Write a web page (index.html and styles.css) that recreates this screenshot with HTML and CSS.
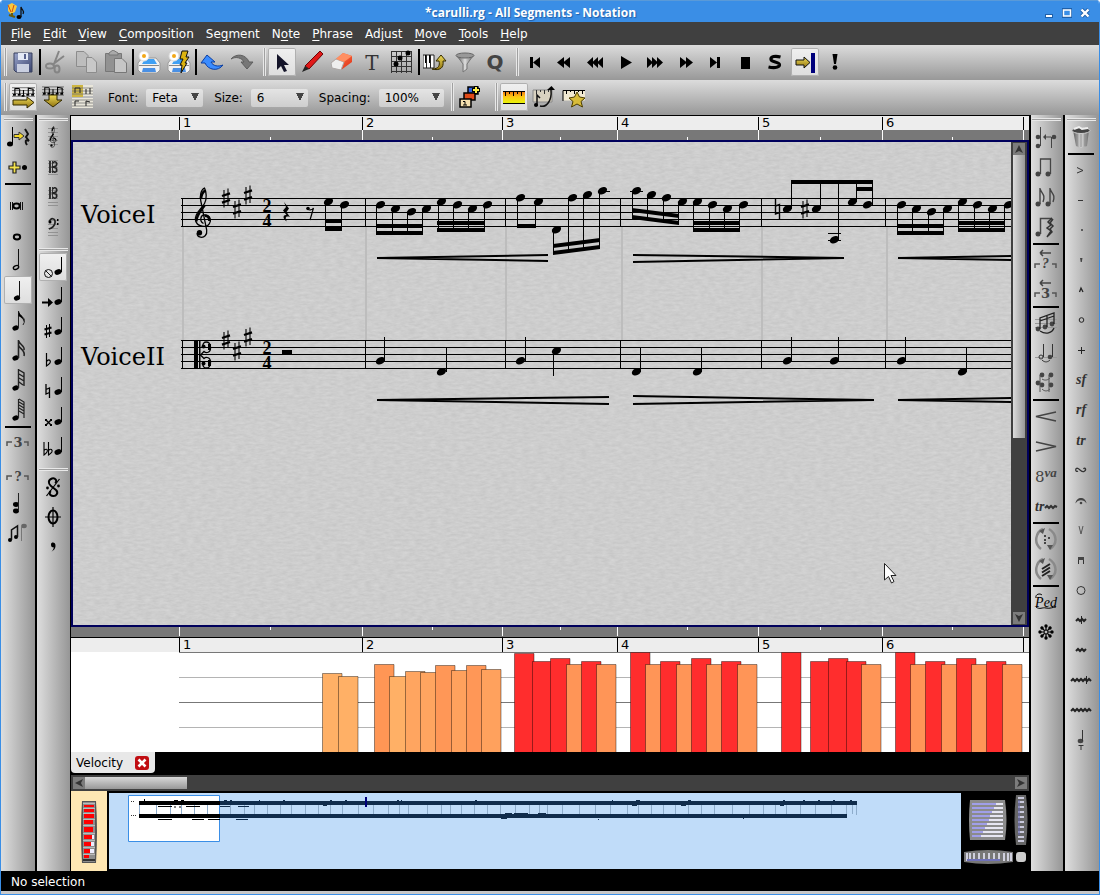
FILE: index.html
```html
<!DOCTYPE html>
<html lang="en">
<head>
<meta charset="utf-8">
<title>*carulli.rg - All Segments - Notation</title>
<link rel="stylesheet" href="styles.css">
</head>
<body>
<svg class="defs" aria-hidden="true">
  <defs>
    <linearGradient id="gold" x1="0" y1="0" x2="0" y2="1"><stop offset="0" stop-color="#f0dc58"/><stop offset="1" stop-color="#8f7210"/></linearGradient>
    <linearGradient id="metal" x1="0" y1="0" x2="1" y2="0"><stop offset="0" stop-color="#555"/><stop offset=".5" stop-color="#ddd"/><stop offset="1" stop-color="#666"/></linearGradient>
    <linearGradient id="disk" x1="0" y1="0" x2="1" y2="1"><stop offset="0" stop-color="#9aa5cc"/><stop offset="1" stop-color="#3a446e"/></linearGradient>
    <linearGradient id="heat" x1="0" y1="0" x2="0" y2="1"><stop offset="0" stop-color="#f07a10"/><stop offset=".4" stop-color="#fdc815"/><stop offset="1" stop-color="#e4fa0a"/></linearGradient>
    <linearGradient id="red" x1="0" y1="0" x2="1" y2="1"><stop offset="0" stop-color="#ff8a5a"/><stop offset="1" stop-color="#e02a10"/></linearGradient>
    <symbol id="head" viewBox="-6 -6 12 12" overflow="visible"><ellipse cx=".5" rx="4.9" ry="3.4" transform="rotate(-27)"/></symbol>
    <symbol id="sharp" viewBox="-6 -12 12 24" overflow="visible"><path d="M-2-8V9.500M2-9.500V8" stroke="#000" stroke-width="1.100"/><path d="M-4-2 4-4.600M-4 4.600 4 2" stroke="#000" stroke-width="2.300"/></symbol>
    <symbol id="n4" viewBox="0 0 24 24"><ellipse cx="17" cy="17" rx="3.600" ry="2.700" transform="rotate(-20 17 17)"/><path d="M20.500 2V17" stroke="#000"/></symbol>
    <symbol id="treble" viewBox="0 0 18 52" overflow="visible"><g fill="none" stroke="#000"><path stroke-width="1.300" d="M9.500 36.500C5 34 6.500 27.500 11 28C16 28.500 17.500 33 15.500 36.500C13 41 3 40.500 1.500 33C.5 26 7.500 22 10.500 16.500C13 12 12.500 4.500 10.500 1C7 2.500 5.500 9 6.800 14L12.700 43C13.400 48 10 51 6.500 50.200C4.500 49.800 3 48 3.200 46"/><path stroke-width="2.600" d="M2.300 34.500C2.300 28 7 23.500 10.500 18.500M11 28.800C14 29 15.500 31 15.400 34M11.200 3.500C9 5 7.300 8.500 7 11.500"/></g><circle cx="5.500" cy="45.800" r="2.700"/></symbol>
    <symbol id="staffmini" viewBox="0 0 24 12"><path d="M0 1.500H24M0 4.500H24M0 7.500H24M0 10.500H24" stroke="#555" stroke-width=".8"/><path d="M3 9V2M8 3V9M3 2.500H8M12 10V4M17 9V2L22 3V9" fill="none" stroke="#000" stroke-width="1.200"/><path d="M1 8H4V10H1ZM6 8H9V10H6ZM10 9H13V11H10ZM15 8H18V10H15ZM20 8H23V10H20Z"/></symbol>
    <symbol id="printer" viewBox="0 0 24 24"><path d="M1 13 5 8H19L23 13V20L20 23H4L1 20Z" fill="#f2f2f2" stroke="#9a9a9a"/><path d="M5 14 8 9H17L20 14Z" fill="#3fa0f4"/><path d="M2 15.500H22" stroke="#888"/><path d="M6 18H18L19 22H5Z" fill="#4a90e4"/><circle cx="7" cy="6" r="5" fill="#fff" stroke="#ddd"/><circle cx="7" cy="6" r="2" fill="#f2a818"/></symbol>
    <symbol id="circ" viewBox="0 0 24 24"><path d="M9 2C2 5-1 16 7 22M15 2C23 7 24 17 16 22" fill="none" stroke="#8a8a8a" stroke-width="2.500"/><path d="M5 4 11 1 9 7ZM13 18 19 18 16 23Z" fill="#555"/></symbol>
    <symbol id="tup" viewBox="0 0 24 24"><path d="M1 14V10H6M18 10H22V14" fill="none" stroke="#555" stroke-width="1.500"/></symbol>
  </defs>
</svg>

<main class="window">
  <header class="titlebar">
    <svg class="logo" viewBox="0 0 20 18"><path d="M2 2 6 0 11 3 9 9 5 11 2 8Z" fill="#f7c83c"/><path d="M2 2 5 9M8 2 6 9" stroke="#d24a10"/><path d="M6 10V14M3 12 9 14" stroke="#6a5a08" stroke-width="2"/><ellipse cx="13" cy="14" rx="2.500" ry="2"/><path d="M15 14V4C16 8 19 7 17 11" stroke="#111" fill="none" stroke-width="1.300"/></svg>
    <h1 class="title">*carulli.rg - All Segments - Notation</h1>
    <div class="winctl">
      <button aria-label="Minimize"><svg viewBox="0 0 12 12"><path d="M2 7H10V11H2Z" fill="#1f5fa8"/><path d="M3 8H9V10H3Z" fill="#fff"/></svg></button>
      <button aria-label="Maximize"><svg viewBox="0 0 12 12"><path d="M1 1H11V11H1Z" fill="#1f5fa8"/><path d="M2.500 3H9.500V9H2.500Z" fill="#3a8ee6" stroke="#fff" stroke-width="1.500"/></svg></button>
      <button aria-label="Close"><svg viewBox="0 0 12 12"><path d="M2.500 2.500 9.500 9.500M9.500 2.500 2.500 9.500" stroke="#1f5fa8" stroke-width="4"/><path d="M2.500 2.500 9.500 9.500M9.500 2.500 2.500 9.500" stroke="#fff" stroke-width="2.400"/></svg></button>
    </div>
  </header>

  <nav class="menubar">
    <button><u>F</u>ile</button><button><u>E</u>dit</button><button><u>V</u>iew</button><button><u>C</u>omposition</button><button>Se<u>g</u>ment</button><button>N<u>o</u>te</button><button><u>P</u>hrase</button><button>Ad<u>j</u>ust</button><button><u>M</u>ove</button><button><u>T</u>ools</button><button><u>H</u>elp</button>
  </nav>

  <div class="toolbar">
    <div class="group">
      <i class="grip"></i>
      <button class="tool" aria-label="Save"><svg viewBox="0 0 24 24"><path d="M3 3H21V22H5L3 20Z" fill="url(#disk)" stroke="#39415f"/><path d="M7 3H17V10H7Z" fill="#e4e9f5"/><path d="M13 4H15V9H13Z" fill="#56608c"/><path d="M6 14H18V22H6Z" fill="#c9cfe0"/></svg></button>
      <i class="sep"></i>
      <button class="tool" aria-label="Cut"><svg viewBox="0 0 24 24" fill="none" stroke="#858585" stroke-width="2"><path d="M15 1 10 14M20 6 8 15"/><ellipse cx="6" cy="16" rx="4" ry="2.500"/><ellipse cx="13" cy="19" rx="2.500" ry="3.500"/></svg></button>
      <button class="tool" aria-label="Copy"><svg viewBox="0 0 24 24" fill="#bdbdbd" stroke="#8c8c8c"><path d="M2.500 1.500H10L14 5.500V16.500H2.500Z"/><path d="M12.500 7.500H18L22.500 12V22.500H12.500Z" fill="#c8c8c8"/></svg></button>
      <button class="tool" aria-label="Paste"><svg viewBox="0 0 24 24" stroke="#777"><path d="M1.500 3.500H17.500V21.500H1.500Z" fill="#929292"/><path d="M5 5V3L9 0 14 3V5Z" fill="#aaa"/><path d="M10.500 8.500H18L22.500 13V22.500H10.500Z" fill="#c6c6c6"/></svg></button>
      <i class="sep"></i>
      <button class="tool" aria-label="Print"><svg viewBox="0 0 24 24"><use href="#printer"/></svg></button>
      <button class="tool" aria-label="Print preview"><svg viewBox="0 0 24 24"><use href="#printer"/><path d="M15 1H21L19 7H22L18 13H20L14 23 15 15H13L16 9H13Z" fill="#dcb310" stroke="#111"/></svg></button>
      <i class="sep"></i>
      <button class="tool" aria-label="Undo"><svg viewBox="0 0 24 24"><path d="M7 5 1 13H5C8 20 18 22 23 15C18 17 13 16 11 12H15Z" fill="#3b8cff" stroke="#0b3da0"/></svg></button>
      <button class="tool" aria-label="Redo"><svg viewBox="0 0 24 24"><path d="M1 9C6 3 16 4 19 12H23L17 19 11 12H14C12 8 6 6 1 9Z" fill="#777" stroke="#5e5e5e"/></svg></button>
    </div>
    <div class="group">
      <i class="grip"></i>
      <button class="tool on" aria-label="Select"><svg viewBox="0 0 24 24"><path d="M7 4V20L11 16 14 22 17 21 14 15H19Z" fill="#15152a"/></svg></button>
      <button class="tool" aria-label="Draw"><svg viewBox="0 0 24 24"><path d="M20 1 23 4 9 19 5 16Z" fill="#e01818" stroke="#6a0505"/><path d="M5 16 9 19 2 22Z" fill="#222"/></svg></button>
      <button class="tool" aria-label="Erase"><svg viewBox="0 0 24 24"><path d="M1 13 13 3 22 6V12L11 20 2 18Z" fill="url(#red)"/><path d="M1 13 6 9 14 12 11 20 2 18Z" fill="#eee" stroke="#aaa"/><path d="M6 9 13 3 22 6 14 12Z" fill="#ff8f62"/></svg></button>
      <button class="tool" aria-label="Text"><svg viewBox="0 0 24 24"><text class="t-serif" x="12" y="20" text-anchor="middle" font-size="20" fill="#333">T</text></svg></button>
      <button class="tool" aria-label="Guitar chord"><svg viewBox="0 0 24 24"><path d="M1.500 1V23M6.500 1V23M11.500 1V23M16.500 1V23M21.500 1V23M1 1.500H22M1 6.500H22M1 11.500H22M1 16.500H22M1 21.500H22" stroke="#333"/><circle cx="6" cy="14" r="2.500"/><circle cx="10" cy="8" r="2.500"/><circle cx="18" cy="3" r="2.500"/></svg></button>
      <i class="sep"></i>
      <button class="tool" aria-label="Step recording"><svg viewBox="0 0 24 24"><path d="M0 5H11V18H0Z" fill="#fff" stroke="#222"/><path d="M2 5H4V13H2ZM6 5H8V13H6Z"/><path d="M3.500 5V18M7.500 5V18" stroke="#222"/><path d="M9 19C16 19 17 15 16 11H13L18 5 23 11H20C21 18 17 21 9 19Z" fill="url(#gold)" stroke="#332a00"/></svg></button>
      <button class="tool" aria-label="Filter"><svg viewBox="0 0 24 24"><path d="M4 6 10 14V22L14 19V14L20 6Z" fill="url(#metal)" stroke="#777"/><ellipse cx="12" cy="5.500" rx="9" ry="2.500" fill="#999" stroke="#666"/></svg></button>
      <button class="tool" aria-label="Quantize"><svg viewBox="0 0 24 24"><text class="t-sans" x="12" y="19" text-anchor="middle" font-size="20" fill="#444">Q</text></svg></button>
    </div>
    <div class="group">
      <i class="grip"></i>
      <button class="tool" aria-label="Rewind to start"><svg viewBox="0 0 24 24"><path d="M7 7H10V18H7ZM17 7V18L10 12.500Z"/></svg></button>
      <button class="tool" aria-label="Rewind"><svg viewBox="0 0 24 24"><path d="M11 7V18L4 12.500ZM17 7V18L10 12.500Z"/></svg></button>
      <button class="tool" aria-label="Fast rewind"><svg viewBox="0 0 24 24"><path d="M10 7V18L4 12.500ZM15 7V18L9 12.500ZM20 7V18L14 12.500Z"/></svg></button>
      <button class="tool" aria-label="Play"><svg viewBox="0 0 24 24"><path d="M8 6V19L19 12.500Z"/></svg></button>
      <button class="tool" aria-label="Fast forward to end"><svg viewBox="0 0 24 24"><path d="M4 7V18L10 12.500ZM9 7V18L15 12.500ZM14 7V18L20 12.500Z"/></svg></button>
      <button class="tool" aria-label="Fast forward"><svg viewBox="0 0 24 24"><path d="M7 7V18L14 12.500ZM13 7V18L20 12.500Z"/></svg></button>
      <button class="tool" aria-label="End"><svg viewBox="0 0 24 24"><path d="M14 7H17V18H14ZM7 7V18L14 12.500Z"/></svg></button>
      <button class="tool" aria-label="Stop"><svg viewBox="0 0 24 24"><path d="M8 7H17V19H8Z"/></svg></button>
      <button class="tool" aria-label="Solo"><svg viewBox="0 0 24 24"><path d="M17.500 7C12 5.500 7.500 6.500 8 9.500C8.500 12.500 17 11.500 16.500 15C16 18 10 18 5.500 17" fill="none" stroke="#000" stroke-width="3.200"/></svg></button>
      <button class="tool on" aria-label="Scroll to follow"><svg viewBox="0 0 24 24"><path d="M3 10H11V7L17 12.500 11 18V15H3Z" fill="url(#gold)" stroke="#111"/><path d="M18 3H22V23H18Z" fill="#00007c"/></svg></button>
      <button class="tool" aria-label="Panic"><svg viewBox="0 0 24 24"><path d="M9.500 4H14.500L13 14H11Z"/><circle cx="12" cy="17.500" r="2.300"/></svg></button>
    </div>
  </div>

  <div class="toolbar">
    <div class="group">
      <i class="grip"></i>
      <button class="tool on" aria-label="Linear mode"><svg viewBox="0 0 24 24"><use href="#staffmini" x="1" y="1" width="23" height="12"/><path d="M2 15H16V12L23 17.500 16 23V20H2Z" fill="url(#gold)" stroke="#332a00"/></svg></button>
      <button class="tool" aria-label="Continuous page mode"><svg viewBox="0 0 24 24"><use href="#staffmini" x="1" y="0" width="22" height="12"/><path d="M8 10H16V15H21L12 22 3 15H8Z" fill="url(#gold)" stroke="#332a00"/></svg></button>
      <button class="tool" aria-label="Multi page mode"><svg viewBox="0 0 24 24"><path d="M1 0H22V11H1ZM1 13H22V23H1Z" fill="#e9e6da"/><path d="M1 0H12V12H1Z" fill="#cdb540"/><path d="M1 3H22M1 6H22M1 9H22M1 15H22M1 18H22M1 21H22" stroke="#777" stroke-width=".8"/><path d="M4 8V3H9V8M15 9V4M19 9V3M4 21V16H8M15 21V16L19 17" stroke="#222" fill="none"/></svg></button>
    </div>
    <div class="fields">
      <label for="font">Font:</label>
      <select id="font" class="w-m"><option>Feta</option></select>
      <label for="size">Size:</label>
      <select id="size" class="w-m"><option>6</option></select>
      <label for="spacing">Spacing:</label>
      <select id="spacing" class="w-l"><option>100%</option></select>
    </div>
    <div class="group wide">
      <i class="grip"></i>
      <button class="tool" aria-label="Add layer"><svg viewBox="0 0 24 24" stroke="#000" stroke-width="1.500"><path d="M10 2H20V9H10Z" fill="#2e62e0"/><path d="M6 8H17V15H6Z" fill="#e04a18"/><path d="M2 14H13V22H2Z" fill="#f4dfae"/><path d="M5 16.500H7V20M5 20H9" stroke-width="1" fill="none"/><path d="M18 1V9M14 5H22" stroke-width="4"/><path d="M18 2V8M15 5H21" stroke="#fff04a" stroke-width="2"/></svg></button>
    </div>
    <div class="group">
      <i class="grip"></i>
      <button class="tool on" aria-label="Velocity ruler"><svg viewBox="0 0 24 24"><path d="M1 7H23V19H1Z" fill="url(#heat)"/><path d="M1 6.500H23M3.500 7V11M7.500 7V9M11.500 7V11M15.500 7V9M19.500 7V11" stroke="#000"/><path d="M1 18.500H23" stroke="#000"/></svg></button>
      <button class="tool" aria-label="Pitch bend ruler"><svg viewBox="0 0 24 24"><path d="M1 5H20V17H1Z" fill="#d9d2c0" stroke="#888"/><path d="M4.500 5V9M8.500 5V7M12.500 5V9M16.500 5V7" stroke="#333"/><path d="M5 21V10L8 13M8 21C15 23 20 15 19 5" fill="none" stroke="#111" stroke-width="1.500"/><path d="M15 5H23L19.500 1Z"/><circle cx="4" cy="20" r="2"/></svg></button>
      <button class="tool" aria-label="Add control ruler"><svg viewBox="0 0 24 24"><path d="M1 5.500H23V15.500H1Z" fill="#f2ead2"/><path d="M1 16V5.500H23M4.500 5V9M8.500 5V7M12.500 5V9M16.500 5V7M20.500 5V9" stroke="#000" fill="none"/><path d="M15 7 17.500 12 23 13 19 16.500 20.500 22 15 19 9.500 22 11 16.500 7 13 12.500 12Z" fill="#d8bc3a" stroke="#4a3c00"/></svg></button>
    </div>
  </div>

  <div class="work">
    <aside class="column">
      <div class="stack">
        <i class="grip"></i>
        <button class="tool" aria-label="Switch to rest"><svg viewBox="0 0 24 24"><ellipse cx="4" cy="19" rx="3" ry="2.500"/><path d="M6.500 2V19" stroke="#000"/><path d="M8 9.500H13V7L18 11 13 15V12.500H8Z" fill="#f4d92a" stroke="#333"/><path d="M19 4 22 9 20 12 23 16M23 16C19 14 19 17 21 20" fill="none" stroke="#111" stroke-width="2"/></svg></button>
        <button class="tool" aria-label="Toggle dot"><svg viewBox="0 0 24 24"><path d="M7 7H10V11H14V14H10V18H7V14H3V11H7Z" fill="#f4e24a" stroke="#222" stroke-width="1.200"/><circle cx="18.500" cy="12.500" r="2.500"/></svg></button>
        <i class="sep"></i>
        <button class="tool" aria-label="Breve"><svg viewBox="0 0 24 24"><path d="M4.500 14V22M6.500 14V22M14.500 14V22M16.500 14V22" stroke="#111"/><ellipse cx="10.500" cy="18" rx="3.200" ry="2.400" fill="none" stroke="#000" stroke-width="2"/></svg></button>
        <button class="tool" aria-label="Whole note"><svg viewBox="0 0 24 24"><ellipse cx="11" cy="19" rx="3.200" ry="2.400" fill="none" stroke="#000" stroke-width="2"/></svg></button>
        <button class="tool" aria-label="Half note"><svg viewBox="0 0 24 24"><ellipse cx="10" cy="19.500" rx="2.800" ry="1.800" transform="rotate(-25 10 19.500)" fill="none" stroke="#000" stroke-width="1.300"/><path d="M12.500 1V18" stroke="#111"/></svg></button>
        <button class="tool on" aria-label="Quarter note"><svg viewBox="0 0 24 24"><ellipse cx="11" cy="20" rx="3.200" ry="2.500" transform="rotate(-20 11 20)"/><path d="M13.500 3V20" stroke="#111"/></svg></button>
        <button class="tool" aria-label="Eighth note"><svg viewBox="0 0 24 24"><ellipse cx="9.500" cy="20" rx="3.200" ry="2.500" transform="rotate(-20 9.500 20)"/><path d="M12.500 20V3C13 9 22 9 17 17" fill="none" stroke="#222"/><path d="M12.500 3C14 8 19 9 18 14C17 10 14 9 12.500 8Z"/></svg></button>
        <button class="tool" aria-label="Sixteenth note"><svg viewBox="0 0 24 24"><ellipse cx="9.500" cy="20" rx="3.200" ry="2.500" transform="rotate(-20 9.500 20)"/><path d="M12.500 20V2C13 7 19 7 18 12M12.500 7C13 11 20 12 18 18" fill="none" stroke="#222" stroke-width="1.600"/></svg></button>
        <button class="tool" aria-label="Thirty-second note"><svg viewBox="0 0 24 24"><ellipse cx="9.500" cy="20" rx="3.200" ry="2.500" transform="rotate(-20 9.500 20)"/><path d="M12.500 20V1M13 2 18 5V18M13 6 18 9M13 10 18 13M13 14 17 17" fill="none" stroke="#222" stroke-width="1.400"/></svg></button>
        <button class="tool" aria-label="Sixty-fourth note"><svg viewBox="0 0 24 24"><ellipse cx="9.500" cy="20" rx="3.200" ry="2.500" transform="rotate(-20 9.500 20)"/><path d="M12.500 20V1M13 1 18 4V20M13 4 18 7M13 7 18 10M13 10 18 13M13 13 18 16" fill="none" stroke="#222" stroke-width="1.200"/></svg></button>
        <i class="sep"></i>
        <button class="tool" aria-label="Triplet"><svg viewBox="0 0 24 24"><use href="#tup" y="1"/><text class="t-serif bold" x="12" y="16" text-anchor="middle" font-size="13" fill="#444">3</text></svg></button>
        <button class="tool" aria-label="Tuplet"><svg viewBox="0 0 24 24"><use href="#tup" y="5"/><text class="t-serif bold" x="12" y="20" text-anchor="middle" font-size="12" fill="#444">?</text></svg></button>
        <button class="tool" aria-label="Chord mode"><svg viewBox="0 0 24 24"><ellipse cx="10" cy="13.500" rx="3" ry="2.400"/><ellipse cx="10" cy="20" rx="3" ry="2.400"/><path d="M12.500 2V20" stroke="#222"/></svg></button>
        <button class="tool" aria-label="Grace mode"><svg viewBox="0 0 24 24"><circle cx="4" cy="19" r="2"/><circle cx="10" cy="16" r="2"/><path d="M5.500 19V9L11.500 5V16" fill="none" stroke="#111" stroke-width="1.500"/><ellipse cx="18" cy="5" rx="2.800" ry="2.200" fill="#666"/><path d="M15.500 5V20" stroke="#777"/></svg></button>
      </div>
    </aside>

    <aside class="column second">
      <div class="stack">
        <i class="grip"></i>
        <button class="tool" aria-label="Treble clef"><svg viewBox="0 0 24 24"><path d="M7 3.500H17M7 7.500H17M7 11.500H17M7 15.500H17M7 19.500H17" stroke="#888" stroke-width=".8"/><use href="#treble" x="8" y="1" width="8" height="22"/></svg></button>
        <button class="tool" aria-label="Alto clef"><svg viewBox="0 0 24 24"><path d="M7 5.500H17M7 8.500H17M7 12.500H17M7 16.500H17M7 19.500H17" stroke="#888" stroke-width=".8"/><path d="M8 6H10V18H8ZM11 6H12V18H11Z" fill="#333"/><path d="M12 8C14 5 17 8 15 11L12 12 15 13C17 16 14 19 12 16" fill="none" stroke="#222" stroke-width="1.600"/></svg></button>
        <button class="tool" aria-label="Tenor clef"><svg viewBox="0 0 24 24"><path d="M7 5.500H17M7 9.500H17M7 13.500H17M7 17.500H17M7 20.500H17" stroke="#888" stroke-width=".8"/><path d="M8 2H10V14H8ZM11 2H12V14H11Z" fill="#333"/><path d="M12 4C14 1 17 4 15 7L12 8 15 9C17 12 14 15 12 12" fill="none" stroke="#222" stroke-width="1.600"/></svg></button>
        <button class="tool" aria-label="Bass clef"><svg viewBox="0 0 24 24"><path d="M7 5.500H17M7 9.500H17M7 13.500H17M7 17.500H17M7 20.500H17" stroke="#888" stroke-width=".8"/><path d="M8.500 7C9 2 15 3 14 8C13.500 11 11 13 8 14" fill="none" stroke="#222" stroke-width="1.700"/><circle cx="9" cy="7" r="1.500"/><path d="M16 4H17.500V6H16ZM16 8H17.500V10H16Z"/></svg></button>
      </div>
      <div class="stack">
        <i class="grip"></i>
        <button class="tool on" aria-label="No accidental"><svg viewBox="0 0 24 24"><use href="#n4"/><circle cx="7.500" cy="18.500" r="4" fill="none" stroke="#111"/><path d="M4.500 15.500 10.500 21.500" stroke="#111"/></svg></button>
        <button class="tool" aria-label="Follow previous accidental"><svg viewBox="0 0 24 24"><use href="#n4"/><path d="M1 17.500H8" stroke="#000" stroke-width="2"/><path d="M7 13 12 17.500 7 22Z"/></svg></button>
        <button class="tool" aria-label="Sharp"><svg viewBox="0 0 24 24"><use href="#n4"/><path d="M5.500 10V23M8.500 9V22" stroke="#000"/><path d="M3.500 14.500 10.500 12.500M3.500 19.500 10.500 17.500" stroke="#000" stroke-width="2"/></svg></button>
        <button class="tool" aria-label="Flat"><svg viewBox="0 0 24 24"><use href="#n4"/><path d="M5.500 8V21C9 19 10 17 9 15.500C8 14.500 6.500 15 5.500 16.500" fill="none" stroke="#000" stroke-width="1.200"/></svg></button>
        <button class="tool" aria-label="Natural"><svg viewBox="0 0 24 24"><use href="#n4"/><path d="M5 9V19L8.500 17.500M8.500 23V13L5 14.500" fill="none" stroke="#000" stroke-width="1.300"/></svg></button>
        <button class="tool" aria-label="Double sharp"><svg viewBox="0 0 24 24"><use href="#n4"/><path d="M5 15 10 20M10 15 5 20" stroke="#000" stroke-width="1.400"/><path d="M4 14H6V16H4ZM9 14H11V16H9ZM4 19H6V21H4ZM9 19H11V21H9Z"/></svg></button>
        <button class="tool" aria-label="Double flat"><svg viewBox="0 0 24 24"><use href="#n4"/><path d="M3 7V20C6 18 7 16 6 14.500C5 14 4 14.500 3 15.500M7.500 7V20C11 18 12 16 10.500 14.500C9.500 14 8.500 14.500 7.500 15.500" fill="none" stroke="#000" stroke-width="1.100"/></svg></button>
      </div>
      <div class="stack">
        <i class="grip"></i>
        <button class="tool" aria-label="Segno"><svg viewBox="0 0 24 24"><path d="M14 8C17 6 14 2.500 11 3.500C7 5 7 8.500 10 11L15 15C18 18 15 21.500 12 21C8 20.500 8 17 10 16" fill="none" stroke="#000" stroke-width="2"/><path d="M18.500 4 5.500 21" stroke="#000" stroke-width="1.200"/><circle cx="6.500" cy="13" r="1.400"/><circle cx="17.500" cy="11" r="1.400"/></svg></button>
        <button class="tool" aria-label="Coda"><svg viewBox="0 0 24 24"><ellipse cx="12" cy="12" rx="4.500" ry="6.500" fill="none" stroke="#000" stroke-width="2"/><path d="M12 2V22M4 12H20" stroke="#000" stroke-width="1.200"/></svg></button>
        <button class="tool" aria-label="Breath mark"><svg viewBox="0 0 24 24"><path d="M10 9.500C10 6.500 15 7 14.500 11C14.500 14 12 16 10.500 16.500C12 15 13 13.500 12.500 12C11 13 10 11.500 10 9.500Z"/></svg></button>
      </div>
    </aside>

    <section class="centre">
      <div class="ruler">
        <svg width="958" height="24" viewBox="71 116 958 24">
          <path d="M71 130H1029V140H71Z" fill="#787878"/>
          <path d="M179.500 117V130M362.500 117V130M502.500 117V130M617.500 117V130M758.500 117V130M882.500 117V130M1023.500 117V130" stroke="#000"/>
          <path d="M179.500 130V140M362.500 130V140M502.500 130V140M617.500 130V140M758.500 130V140M882.500 130V140M1023.500 130V140M270.500 137V140M432.500 137V140M560.500 137V140M687.500 137V140M820.500 137V140M952.500 137V140" stroke="#fff"/>
          <g class="t-num"><text x="183" y="127">1</text><text x="366" y="127">2</text><text x="506" y="127">3</text><text x="621" y="127">4</text><text x="762" y="127">5</text><text x="886" y="127">6</text></g>
        </svg>
      </div>

      <div class="scoreframe">
        <div class="score">
          <svg class="paper" width="100%" height="100%" preserveAspectRatio="none"><filter id="grain" color-interpolation-filters="sRGB"><feTurbulence type="fractalNoise" baseFrequency=".14 .4" numOctaves="3" seed="4"/><feColorMatrix values=".08 0 0 0 .765  .08 0 0 0 .765  .08 0 0 0 .765  0 0 0 0 1"/></filter><rect width="100%" height="100%" filter="url(#grain)"/></svg>
          <svg class="notes" width="938" height="483" viewBox="73 142 938 483">
            <g class="t-voice"><text x="81" y="223">VoiceI</text><text x="81" y="365">VoiceII</text></g>
            <path d="M183 227V340M366 227V340M506 227V340M622 227V340M762 227V340M887 227V340" stroke="#bdbdbd" stroke-width="2"/>
            <path d="M181 198.500H1011M181 205.500H1011M181 212.500H1011M181 219.500H1011M181 226.500H1011M181 340.500H1011M181 347.500H1011M181 354.500H1011M181 361.500H1011M181 368.500H1011M182.500 198V227M365.500 198V227M505.500 198V227M620.500 198V227M761.500 198V227M885.500 198V227M182.500 340V369M365.500 340V369M505.500 340V369M620.500 340V369M761.500 340V369M885.500 340V369" stroke="#000"/>
            <use href="#treble" x="194" y="187" width="18" height="52"/>
            <path d="M194 341H198V369H194ZM199 341H200.500V369H199Z"/>
            <g fill="none" stroke="#000"><path d="M203 346C202 341 210 340 210.500 347C211 353 206 353.500 204 351.500L200.500 355 204 358.500C206 356.500 211 357 210.500 363C210 370 202 369 203 364" stroke-width="1.300"/><path d="M209.500 344V350M209.500 360V366" stroke-width="3"/></g>
            <circle cx="203.500" cy="346.500" r="2"/><circle cx="203.500" cy="363.500" r="2"/>
            <g id="key"><use href="#sharp" x="220" y="186" width="12" height="24"/><use href="#sharp" x="231" y="197" width="12" height="24"/><use href="#sharp" x="242" y="183" width="12" height="24"/></g>
            <use href="#key" y="142"/>
            <g class="t-time"><text x="267" y="212">2</text><text x="267" y="227">4</text><text x="267" y="354">2</text><text x="267" y="369">4</text></g>
            <path d="M284 202 289 208.500 286.500 212 290 217C286 215.500 284.500 217.500 287 221.500C282 218.500 283 214.500 286.500 215L283 210.500 286 207Z"/>
            <path d="M307 208.500C309 211 312 210 313.500 208L310 220" fill="none" stroke="#000" stroke-width="1.200"/><circle cx="308" cy="208.500" r="1.800"/>
            <path d="M282 350H292V354H282Z"/>
            <g stroke="#000">
              <path d="M325.500 203V231M341.500 206V231M376.500 206V234M392.500 210V234M407.500 213V234M422.500 210V234M438.500 203V231M453.500 206V231M468.500 210V231M484.500 206V231M517.500 199V228M535.500 203V228M553.500 231V254M568.500 199V252M583.500 196V250M599.500 192V248M632.500 192V218M647.500 196V220M663.500 199V222M678.500 203V224M693.500 203V231M709.500 206V231M724.500 210V231M739.500 206V231"/>
              <path d="M791.500 181V209M820.500 181V209M838.500 181V240M856.500 181V202M872.500 181V205M897.500 206V234M912.500 210V234M928.500 213V234M943.500 210V234M958.500 203V231M974.500 206V231M989.500 210V231M1004.500 206V231"/>
              <path d="M598 191.500H610M630 191.500H643M828 233.500H841M828 240.500H841"/>
              <path d="M384.500 337V361M446.500 348V372M525.500 337V361M553.500 352V376M640.500 348V372M701.500 348V372M791.500 337V361M838.500 337V361M905.500 337V361M966.500 348V372"/>
            </g>
            <path d="M325 219H341.500V223H325ZM325 227H341.500V231H325ZM376 224H423V228H376ZM376 231H423V235H376ZM437 221H485V225H437ZM437 228H485V232H437ZM517 224H536V228H517ZM553 244 600 238V242L553 248ZM553 251 600 245V249L553 255ZM632 208 679 214V218L632 212ZM632 215 679 221V225L632 219ZM693 221H740V225H693ZM693 228H740V232H693ZM791 180H873V184H791ZM856 187H873V191H856ZM897 224H944V228H897ZM897 231H944V235H897ZM958 221H1005V225H958ZM958 228H1005V232H958Z"/>
            <g id="heads">
              <use href="#head" x="322" y="196" width="12" height="12"/><use href="#head" x="338" y="199" width="12" height="12"/>
              <use href="#head" x="374" y="199" width="12" height="12"/><use href="#head" x="389" y="203" width="12" height="12"/><use href="#head" x="405" y="206" width="12" height="12"/><use href="#head" x="420" y="203" width="12" height="12"/>
              <use href="#head" x="435" y="196" width="12" height="12"/><use href="#head" x="451" y="199" width="12" height="12"/><use href="#head" x="466" y="203" width="12" height="12"/><use href="#head" x="481" y="199" width="12" height="12"/>
              <use href="#head" x="514" y="192" width="12" height="12"/><use href="#head" x="532" y="196" width="12" height="12"/>
              <use href="#head" x="550" y="224" width="12" height="12"/><use href="#head" x="566" y="192" width="12" height="12"/><use href="#head" x="581" y="189" width="12" height="12"/><use href="#head" x="596" y="185" width="12" height="12"/>
              <use href="#head" x="630" y="185" width="12" height="12"/><use href="#head" x="645" y="189" width="12" height="12"/><use href="#head" x="660" y="192" width="12" height="12"/><use href="#head" x="676" y="196" width="12" height="12"/>
              <use href="#head" x="691" y="196" width="12" height="12"/><use href="#head" x="706" y="199" width="12" height="12"/><use href="#head" x="721" y="203" width="12" height="12"/><use href="#head" x="737" y="199" width="12" height="12"/>
              <use href="#head" x="781" y="203" width="12" height="12"/><use href="#head" x="810" y="203" width="12" height="12"/><use href="#head" x="828" y="234" width="12" height="12"/><use href="#head" x="846" y="196" width="12" height="12"/><use href="#head" x="861" y="199" width="12" height="12"/>
              <use href="#head" x="895" y="199" width="12" height="12"/><use href="#head" x="910" y="203" width="12" height="12"/><use href="#head" x="925" y="206" width="12" height="12"/><use href="#head" x="941" y="203" width="12" height="12"/>
              <use href="#head" x="956" y="196" width="12" height="12"/><use href="#head" x="971" y="199" width="12" height="12"/><use href="#head" x="986" y="203" width="12" height="12"/><use href="#head" x="1002" y="199" width="12" height="12"/>
              <use href="#head" x="374" y="355" width="12" height="12"/><use href="#head" x="435" y="366" width="12" height="12"/><use href="#head" x="514" y="355" width="12" height="12"/><use href="#head" x="550" y="345" width="12" height="12"/><use href="#head" x="630" y="366" width="12" height="12"/><use href="#head" x="691" y="366" width="12" height="12"/><use href="#head" x="781" y="355" width="12" height="12"/><use href="#head" x="828" y="355" width="12" height="12"/><use href="#head" x="895" y="355" width="12" height="12"/><use href="#head" x="956" y="366" width="12" height="12"/>
            </g>
            <path d="M775.500 199V214L779.500 212.500M779.500 219V204.500L775.500 206" fill="none" stroke="#000" stroke-width="1.400"/>
            <use href="#sharp" x="799" y="197" width="12" height="24"/>
            <path d="M548 255 377 258 548 261M633 255 844 258 633 262M1011 256 898 258 1011 260M609 397 377 400 609 404M633 396 874 400 633 404M1011 398 898 400 1011 402" fill="none" stroke="#000" stroke-width="2"/>
            <path d="M884.500 563.500V580L888.500 576.500 891.500 583 894 581.500 891 575.500H896Z" fill="#fff" stroke="#222"/>
          </svg>
        </div>
        <div class="vscroll">
          <button class="arrow" aria-label="Scroll up"><svg viewBox="0 0 12 12"><path d="M6 2 10 10 6 8 2 10Z"/></svg></button>
          <div class="vtrack"><i class="vthumb"></i></div>
          <button class="arrow" aria-label="Scroll down"><svg viewBox="0 0 12 12"><path d="M6 10 10 2 6 4 2 2Z"/></svg></button>
        </div>
      </div>

      <div class="ruler">
        <svg width="958" height="125" viewBox="71 627 958 125">
          <path d="M71 627H1029V637H71Z" fill="#787878"/>
          <path d="M71 637H1029V638H71Z"/>
          <path d="M71 652H1029V752H71Z" fill="#fff"/>
          <path d="M179 652.500H1029" stroke="#777"/>
          <path d="M179.500 638V652M362.500 638V652M502.500 638V652M617.500 638V652M758.500 638V652M882.500 638V652M1023.500 638V652" stroke="#000"/>
          <path d="M179.500 627V636M362.500 627V636M502.500 627V636M617.500 627V636M758.500 627V636M882.500 627V636M1023.500 627V636M270.500 627V630M432.500 627V630M560.500 627V630M687.500 627V630M820.500 627V630M952.500 627V630" stroke="#fff"/>
          <g class="t-num"><text x="183" y="649">1</text><text x="366" y="649">2</text><text x="506" y="649">3</text><text x="621" y="649">4</text><text x="762" y="649">5</text><text x="886" y="649">6</text></g>
          <path d="M179 677.500H1029M179 727.500H1029" stroke="#b4b4b4"/><path d="M179 702.500H1029" stroke="#777"/>
          <g stroke="#000" stroke-opacity=".4">
            <g fill="#ffb066"><path d="M322.500 673.500H342V760H322.500Z"/><path d="M338.500 676.500H358V760H338.500Z"/></g>
            <path d="M374.500 664.500H394V760H374.500Z" fill="#ff9655"/><path d="M389.500 676.500H409V760H389.500Z" fill="#ffb066"/><path d="M405.500 671.500H425V760H405.500Z" fill="#ffa560"/><path d="M420.500 672.500H440V760H420.500Z" fill="#ffa560"/>
            <path d="M435.500 665.500H455V760H435.500Z" fill="#ff9757"/><path d="M451.500 670.500H471V760H451.500Z" fill="#ffa15d"/><path d="M466.500 665.500H486V760H466.500Z" fill="#ff9757"/><path d="M481.500 669.500H501V760H481.500Z" fill="#ffa15d"/>
            <g fill="#ff2d2d"><path d="M514.500 653.500H534V760H514.500Z"/><path d="M532.500 661.500H552V760H532.500Z"/><path d="M550.500 658.500H570V760H550.500Z"/></g>
            <path d="M566.500 664.500H586V760H566.500Z" fill="#ff9557"/><path d="M581.500 661.500H601V760H581.500Z" fill="#ff2d2d"/><path d="M596.500 664.500H616V760H596.500Z" fill="#ff9557"/>
            <path d="M630.500 652.500H650V760H630.500Z" fill="#ff2d2d"/><path d="M645.500 664.500H665V760H645.500Z" fill="#ff9557"/><path d="M660.500 661.500H680V760H660.500Z" fill="#ff2d2d"/><path d="M676.500 664.500H696V760H676.500Z" fill="#ff9557"/><path d="M691.500 658.500H711V760H691.500Z" fill="#ff2d2d"/><path d="M706.500 664.500H726V760H706.500Z" fill="#ff9557"/><path d="M721.500 661.500H741V760H721.500Z" fill="#ff2d2d"/><path d="M737.500 664.500H757V760H737.500Z" fill="#ff9557"/>
            <g fill="#ff2d2d"><path d="M781.500 652.500H801V760H781.500Z"/><path d="M810.500 661.500H830V760H810.500Z"/><path d="M828.500 658.500H848V760H828.500Z"/><path d="M846.500 661.500H866V760H846.500Z"/></g><path d="M861.500 664.500H881V760H861.500Z" fill="#ff9557"/>
            <path d="M895.500 652.500H915V760H895.500Z" fill="#ff2d2d"/><path d="M910.500 664.500H930V760H910.500Z" fill="#ff9557"/><path d="M925.500 661.500H945V760H925.500Z" fill="#ff2d2d"/><path d="M941.500 664.500H961V760H941.500Z" fill="#ff9557"/><path d="M956.500 658.500H976V760H956.500Z" fill="#ff2d2d"/><path d="M971.500 664.500H991V760H971.500Z" fill="#ff9557"/><path d="M986.500 661.500H1006V760H986.500Z" fill="#ff2d2d"/><path d="M1002.500 664.500H1022V760H1002.500Z" fill="#ff9557"/>
          </g>
        </svg>
      </div>

      <div class="tabs">
        <div class="tab">Velocity
          <button class="close" aria-label="Close Velocity"><svg viewBox="0 0 14 14"><path d="M3.500 3.500 10.500 10.500M10.500 3.500 3.500 10.500" stroke="#fff" stroke-width="2.600"/></svg></button>
        </div>
      </div>

      <div class="hscroll">
        <button class="arrow" aria-label="Scroll left"><svg viewBox="0 0 12 12"><path d="M2 6 10 2 8 6 10 10Z"/></svg></button>
        <div class="htrack"><i class="hthumb"></i></div>
        <button class="arrow" aria-label="Scroll right"><svg viewBox="0 0 12 12"><path d="M10 6 2 2 4 6 2 10Z"/></svg></button>
      </div>

      <div class="panner">
        <div class="wheelbox">
          <svg width="16" height="63" viewBox="81 799 16 63"><path d="M82 800H96Q98 830 96 862H82Q80 830 82 800Z" fill="#555"/><path d="M83 801H95V861H83Z" fill="#8e8e8e"/><path d="M84 804H94V806H84ZM84 808H94V811H84ZM84 813H94V817H84ZM84 819H93V823H84ZM84 826H93V831H84ZM84 834H92V838H84ZM84 841H91V845H84ZM84 848H90V852H84ZM84 854H89V857H84Z" fill="#f00"/><path d="M83 802.500H95M83 807.500H95M83 812.500H95M83 818.500H95M83 824.500H95M83 832.500H95M83 839.500H95M83 846.500H95M83 853.500H95" stroke="#bbb"/><path d="M92 834H94V838H92ZM91 841H94V845H91ZM90 848H94V852H90Z" fill="#eef"/><path d="M83 858H95V860H83Z" fill="#333"/></svg>
        </div>
        <div class="overview">
          <svg width="852" height="76" viewBox="109 793 852 76">
            <path d="M128.500 795.500H219.500V841.500H128.500Z" fill="#fff" stroke="#3a8ee6"/>
            <path d="M131 801.500H135M131 815.500H136" stroke="#333" stroke-dasharray="1 1"/>
            <path d="M139.500 801V818M156.500 805V814M170.500 805V814M181.500 805V814M194.500 805V814M207.500 805V814M230.500 805V814M244.500 805V814M254.500 805V814M267.500 805V814M280.500 805V814M291.500 805V814M305.500 805V814M318.500 805V814M330.500 805V814M342.500 805V814M358.500 805V814M373.500 805V814M388.500 805V814M399.500 805V814M408.500 805V814M427.500 805V814M441.500 805V814M450.500 805V814M461.500 805V814M474.500 805V814M487.500 805V814M500.500 805V814M515.500 805V814M529.500 805V814M539.500 805V814M547.500 805V814M562.500 805V814M579.500 805V814M595.500 805V814M610.500 805V814M627.500 805V814M638.500 805V814M651.500 805V814M663.500 805V814M675.500 805V814M688.500 805V814M701.500 805V814M714.500 805V814M732.500 805V814M749.500 805V814M763.500 805V814M775.500 805V814M786.500 805V814M800.500 805V814M815.500 805V814M831.500 805V814M846.500 805V814M852.500 805V814M856.500 805V815" stroke="#8eaccb"/>
            <path d="M139 801H220V805H139ZM139 814H220V818H139Z"/><path d="M220 801H857V805H220ZM220 814H847V818H220Z" fill="#102c4c"/>
            <path d="M158 806.500H172M186 806.500H200M158 819.500H172M192 819.500H204M208 819.500H220M175 806V808M180 806V808M144.500 799V801M174 800.500H178M181 800.500H184" stroke="#000"/>
            <path d="M220 806.500H230M238 806.500H249M236 819.500H248M224 800.500H227M230 800.500H232M259 800.500H260M283 800.500H285M323 805.500H327M330 800.500H332M345 800.500H347M397 800.500H399M401 800.500H402M475 800.500H477M505 813.500H512M514 813.500H528M538 813.500H546M501 818.500H507M632 805.500H637M636 800.500H640M681 805.500H686M688 800.500H691M780 805.500H784M783 800.500H785M803 800.500H805M818 800.500H820M833 800.500H835M850 800.500H852M612 800.500H613M598 819.500H599M743 818.500H744" stroke="#102c4c"/>
            <path d="M365 797H367V807H365Z" fill="#00007c"/>
          </svg>
        </div>
        <div class="wheels">
          <svg width="68" height="76" viewBox="961 793 68 76">
            <path d="M970 800H1005Q1008 820 1005 840H970Q968 820 970 800Z" fill="#8b8b8b"/>
            <path d="M972 804H1003M972 808H1003M972 812H1003M972 816H1003M972 820H1003M972 824H1003M972 828H1003M972 832H1003M972 836H1003" stroke="#e6e6f2" stroke-width="2"/>
            <path d="M972 804H996M972 808H994M972 812H992M972 816H990M972 820H989M972 824H987M972 828H985M972 832H983M972 836H981" stroke="#a09fe8" stroke-width="2"/>
            <path d="M1016 795H1026Q1029 820 1026 845H1016Q1013 820 1016 795Z" fill="#666"/>
            <path d="M1018 798H1024M1018 802H1024M1018 807H1024M1018 812H1024M1018 817H1024M1018 822H1024M1018 827H1024M1018 832H1024M1018 837H1024M1018 841H1024" stroke="#c9c9dc" stroke-width="2"/><path d="M1018 800H1020V835H1018Z" fill="#6668a8" opacity=".6"/>
            <path d="M964 852Q988 848 1013 852V862Q988 866 964 862Z" fill="#777"/>
            <path d="M967 853V861M970 853V861M974 853V861M979 853V861M984 853V861M989 853V861M994 853V861M999 853V861M1004 853V861M1008 853V861M1011 853V861" stroke="#d0d0de" stroke-width="2"/><path d="M967 859H1000V861H967Z" fill="#7072b8"/>
            <rect x="1016" y="852" width="10" height="10" rx="3" fill="#ccc"/>
          </svg>
        </div>
      </div>
    </section>

    <aside class="column third">
      <div class="stack dim">
        <i class="grip"></i>
        <button class="tool" aria-label="Transform"><svg viewBox="0 0 24 24"><circle cx="4" cy="12" r="2.300"/><circle cx="4" cy="21" r="2.300"/><path d="M6.500 2V21M10 12H17M17.500 12V23" stroke="#444"/><path d="M9 12 12 9V15Z"/><circle cx="20" cy="12" r="2.300"/></svg></button>
        <button class="tool" aria-label="Beam group"><svg viewBox="0 0 24 24"><circle cx="4" cy="19" r="2.500"/><circle cx="14" cy="19" r="2.500"/><path d="M6.500 19V4H16.500V19" fill="none" stroke="#444" stroke-width="1.300"/></svg></button>
        <button class="tool" aria-label="Unbeam"><svg viewBox="0 0 24 24"><circle cx="4" cy="19" r="2.500"/><circle cx="14" cy="19" r="2.500"/><path d="M6 19V3C7 9 12 9 9 17M16 19V3C17 9 22 9 19 17" fill="none" stroke="#444" stroke-width="1.400"/></svg></button>
        <button class="tool" aria-label="Auto beam"><svg viewBox="0 0 24 24"><circle cx="4" cy="19" r="2.500"/><path d="M6.500 19V3.500H18" fill="none" stroke="#444" stroke-width="1.500"/><path d="M18 3 14 7 17 10 13 13 17 16 13 22M19 4 16 8 19 11 16 14 18 17 14 21" fill="none" stroke="#333" stroke-width="1.500"/></svg></button>
        <i class="sep"></i>
        <button class="tool" aria-label="Tuplet group"><svg viewBox="0 0 24 24"><path d="M6 5H17M6 5 9 2M6 5 9 8" fill="none" stroke="#444" stroke-width="1.500"/><use href="#tup" y="6"/><text class="t-ital" x="11.500" y="20" text-anchor="middle" font-size="14" fill="#444">?</text></svg></button>
        <button class="tool" aria-label="Triplet group"><svg viewBox="0 0 24 24"><path d="M6 5H17M6 5 9 2M6 5 9 8" fill="none" stroke="#444" stroke-width="1.500"/><use href="#tup" y="5"/><text class="t-serif bold" x="11.500" y="20" text-anchor="middle" font-size="13" fill="#444">3</text></svg></button>
        <i class="sep"></i>
        <button class="tool" aria-label="Slur"><svg viewBox="0 0 24 24"><path d="M1 8.500H23M1 12.500H23M1 16.500H23" stroke="#999"/><circle cx="4" cy="18" r="2.400"/><circle cx="11" cy="16" r="2.400"/><circle cx="18" cy="13" r="2.400"/><path d="M6 18V7L20 2V13M13 16V5M6 10 20 5M6 20C12 24 18 22 20 17" fill="none" stroke="#222" stroke-width="1.300"/></svg></button>
        <button class="tool" aria-label="Tie"><svg viewBox="0 0 24 24"><path d="M1 16.500H23" stroke="#999"/><circle cx="7" cy="16" r="2" fill="none" stroke="#333"/><circle cx="16" cy="16" r="2.300"/><path d="M9.500 16V3M18.500 16V3M8 19C11 22 14 21 16 19" fill="none" stroke="#333"/></svg></button>
        <button class="tool" aria-label="Tied chord"><svg viewBox="0 0 24 24"><circle cx="8" cy="4" r="2.400"/><circle cx="17" cy="4" r="2.400"/><circle cx="4" cy="12" r="2.400"/><circle cx="8" cy="14" r="2.400"/><circle cx="17" cy="14" r="2.400"/><path d="M6 4V21M15 4V21M8 8C11 10 14 9 16 7M8 18C11 21 14 20 16 18" fill="none" stroke="#555"/></svg></button>
        <i class="sep"></i>
        <button class="tool" aria-label="Crescendo"><svg viewBox="0 0 24 24"><path d="M22 8 2 12.500 22 17" fill="none" stroke="#444" stroke-width="1.500"/></svg></button>
        <button class="tool" aria-label="Decrescendo"><svg viewBox="0 0 24 24"><path d="M2 8 22 12.500 2 17" fill="none" stroke="#444" stroke-width="1.500"/></svg></button>
        <button class="tool" aria-label="Ottava"><svg viewBox="0 0 24 24"><text class="t-octave" x="1" y="18" fill="#444">8<tspan class="t-ital" dy="-5" font-size="13">va</tspan></text></svg></button>
        <button class="tool" aria-label="Trill line"><svg viewBox="0 0 24 24"><text class="t-ital" x="1" y="17" font-size="14" fill="#333">tr</text><path d="M11 14 13 12 15 14 17 12 19 14 21 12 23 13" fill="none" stroke="#333" stroke-width="2"/></svg></button>
        <i class="sep"></i>
        <button class="tool" aria-label="Cycle dots"><svg viewBox="0 0 24 24"><use href="#circ"/><path d="M10 8H12V10H10ZM10 12H12V14H10ZM14 10H16V12H14ZM10 15H12V17H10Z"/></svg></button>
        <button class="tool" aria-label="Cycle slashes"><svg viewBox="0 0 24 24"><use href="#circ"/><path d="M8 12 16 7M8 15.500 16 10.500M8 19 16 14" stroke="#222" stroke-width="2"/></svg></button>
        <i class="sep"></i>
        <button class="tool black" aria-label="Pedal down"><svg viewBox="0 0 24 24"><text class="t-pedal" x="12" y="17" text-anchor="middle">Ped</text><path d="M2 8C1 4 6 3 8 5M2 17C6 20 8 17 12 18C16 19 19 17 22 17" fill="none" stroke="#000"/></svg></button>
        <button class="tool black" aria-label="Pedal up"><svg viewBox="0 0 24 24"><path d="M12 5V19M5 12H19M7 7 17 17M17 7 7 17" stroke="#000" stroke-width="1.200"/><circle cx="12" cy="12" r="2" fill="#bbb" stroke="#000"/><circle cx="12" cy="6" r="1.700"/><circle cx="12" cy="18" r="1.700"/><circle cx="6" cy="12" r="1.700"/><circle cx="18" cy="12" r="1.700"/><circle cx="8" cy="8" r="1.700"/><circle cx="16" cy="8" r="1.700"/><circle cx="8" cy="16" r="1.700"/><circle cx="16" cy="16" r="1.700"/></svg></button>
      </div>
    </aside>

    <aside class="column fourth">
      <div class="stack dim">
        <i class="grip"></i>
        <button class="tool" aria-label="Remove marks"><svg viewBox="0 0 24 24"><path d="M4 5H20L18 21Q12 24 7 21Z" fill="url(#metal)"/><path d="M8 9V21M12 9V22M16 9V21" stroke="#8a8a8a"/><ellipse cx="12" cy="5.500" rx="9" ry="3" fill="#444" stroke="#ccc"/><path d="M5 4 10 2 13 4 19 3" stroke="#eee" stroke-width="2" fill="none"/></svg></button>
        <i class="sep"></i>
        <button class="tool" aria-label="Accent"><svg viewBox="0 0 24 24"><path d="M8 9.500 14 12.500 8 15" fill="none" stroke="#333"/></svg></button>
        <button class="tool" aria-label="Tenuto"><svg viewBox="0 0 24 24"><path d="M9 12.500H14" stroke="#333"/></svg></button>
        <button class="tool" aria-label="Staccato"><svg viewBox="0 0 24 24"><circle cx="13" cy="12" r="1.100"/></svg></button>
        <button class="tool" aria-label="Staccatissimo"><svg viewBox="0 0 24 24"><path d="M11 10H13.500L12.800 14H11.700Z"/></svg></button>
        <button class="tool" aria-label="Marcato"><svg viewBox="0 0 24 24"><path d="M10.500 14 12 10 14 14" fill="none" stroke="#222" stroke-width="1.300"/></svg></button>
        <button class="tool" aria-label="Open"><svg viewBox="0 0 24 24"><circle cx="12.500" cy="12" r="2.300" fill="none" stroke="#222"/></svg></button>
        <button class="tool" aria-label="Stopped"><svg viewBox="0 0 24 24"><path d="M12.500 9V16M9 12.500H16" stroke="#222"/></svg></button>
        <button class="tool" aria-label="Sforzando"><svg viewBox="0 0 24 24"><text class="t-ital" x="12" y="16" text-anchor="middle" font-size="14" fill="#333">sf</text></svg></button>
        <button class="tool" aria-label="Rinforzando"><svg viewBox="0 0 24 24"><text class="t-ital" x="12" y="16" text-anchor="middle" font-size="14" fill="#333">rf</text></svg></button>
        <button class="tool" aria-label="Trill"><svg viewBox="0 0 24 24"><text class="t-ital" x="12" y="17" text-anchor="middle" font-size="14" fill="#333">tr</text></svg></button>
        <button class="tool" aria-label="Turn"><svg viewBox="0 0 24 24"><path d="M9 13C6 15 6 9 9 10.500C11 11.500 13 14.500 15 13.500C18 12 16 8.500 14.500 11" fill="none" stroke="#333" stroke-width="1.300"/></svg></button>
        <button class="tool" aria-label="Fermata"><svg viewBox="0 0 24 24"><path d="M6.500 15.500C7 8 17 8 17.500 15.500C15.500 11 8.500 11 6.500 15.500Z"/><circle cx="12" cy="15" r="1.300"/></svg></button>
        <button class="tool" aria-label="Up bow"><svg viewBox="0 0 24 24"><path d="M10 8 12 16 14 8" fill="none" stroke="#555"/></svg></button>
        <button class="tool" aria-label="Down bow"><svg viewBox="0 0 24 24"><path d="M9.500 16V11M14.500 16V11" stroke="#333"/><path d="M9 9H15V12H9Z"/></svg></button>
        <button class="tool" aria-label="Harmonic"><svg viewBox="0 0 24 24"><circle cx="12" cy="12.500" r="4" fill="none" stroke="#333"/></svg></button>
        <button class="tool" aria-label="Mordent"><svg viewBox="0 0 24 24"><path d="M7 13 9 11 11 13 13 11 15 13 17 11" fill="none" stroke="#222" stroke-width="2"/><path d="M12.500 8V16" stroke="#222"/></svg></button>
        <button class="tool" aria-label="Inverted mordent"><svg viewBox="0 0 24 24"><path d="M7 13 9 11 11 13 13 11 15 13 17 11" fill="none" stroke="#222" stroke-width="2"/></svg></button>
        <button class="tool" aria-label="Long mordent"><svg viewBox="0 0 24 24"><path d="M2 13 4 11 6 13 8 11 10 13 12 11 14 13 16 11 18 13 20 11 22 13" fill="none" stroke="#222" stroke-width="2"/><path d="M17.500 8V16" stroke="#222"/></svg></button>
        <button class="tool" aria-label="Long inverted mordent"><svg viewBox="0 0 24 24"><path d="M2 13 4 11 6 13 8 11 10 13 12 11 14 13 16 11 18 13 20 11 22 13" fill="none" stroke="#222" stroke-width="2"/></svg></button>
        <button class="tool" aria-label="Text mark"><svg viewBox="0 0 24 24"><ellipse cx="11.500" cy="13" rx="2.800" ry="2.200"/><path d="M13.500 2V13" stroke="#333"/><path d="M9.500 17.500H14.500M12 17V22" stroke="#333"/></svg></button>
      </div>
    </aside>
  </div>

  <footer class="status">No selection</footer>
</main>
</body>
</html>
```
FILE: styles.css
```css
* { box-sizing: border-box; }

body {
  margin: 0;
  background: #fff;
  font: 12px/16px "DejaVu Sans", sans-serif;
  color: #000;
}

button {
  margin: 0;
  padding: 0;
  border: 0;
  background: none;
  font: inherit;
  color: inherit;
}

svg { display: block; }

.defs { position: absolute; width: 0; height: 0; }

.window {
  display: flex;
  flex-direction: column;
  min-height: 100vh;
  border: 1px solid #3a8ee6;
  border-top: 0;
  border-radius: 4px 4px 0 0;
  overflow: hidden;
}

/* Title bar and menus */
.titlebar {
  display: flex;
  align-items: center;
  height: 22px;
  background: #3a8ee6;
  border-top: 1px solid #5a9ad8;
}
.logo { width: 20px; height: 18px; margin-left: 5px; }
.title {
  flex: 1;
  margin: 0;
  padding: 2px 8px 0 0;
  font: 700 12px/20px "Open Sans", sans-serif;
  text-align: center;
  color: #fff;
  text-shadow: 1px 1px 1px #1f5fa8;
}
.winctl { display: flex; gap: 6px; padding: 2px 8px 0 0; }
.winctl button { width: 12px; height: 12px; }

.menubar {
  display: flex;
  gap: 12px;
  align-items: center;
  height: 23px;
  padding-left: 10px;
  background: #404040;
  color: #fff;
}
.menubar u { text-underline-offset: 2px; }

/* Horizontal tool bars */
.toolbar {
  display: flex;
  gap: 7px;
  height: 35px;
  padding: 3px 3px 4px;
  background: linear-gradient(#dcdcdc, #989898);
}
.group { display: flex; gap: 2px; }
.group.wide { margin-right: 4px; }

.tool {
  display: grid;
  place-items: center;
  width: 28px;
  height: 28px;
  border-radius: 2px;
}
.tool svg { width: 24px; height: 24px; }
.tool.on {
  background: linear-gradient(#f0f0f0, #dedede);
  box-shadow: inset 0 0 0 1px #b0b0b0;
}

.toolbar .grip {
  width: 3px;
  background: linear-gradient(90deg, #e8e8e8 33%, #a0a0a0 33% 66%, #e8e8e8 66%);
}
.toolbar .sep { width: 2px; height: 26px; margin: 1px -1px 0 0; background: #000; }

.fields { display: flex; align-items: center; gap: 8px; padding: 1px 0 0 4px; }
.fields select + label { margin-left: 3px; }
.fields select {
  height: 18px;
  padding: 0 6px;
  border: 0;
  border-radius: 2px;
  appearance: none;
  background-image:
    linear-gradient(65deg, transparent 50%, #444 52%),
    linear-gradient(-65deg, transparent 50%, #444 52%),
    linear-gradient(#e4e4e4, #cecece);
  background-size: 4px 8px, 4px 8px, 100% 100%;
  background-position: right 8px top 4px, right 4px top 4px, 0 0;
  background-repeat: no-repeat;
  font: inherit;
  color: #000;
}
.w-m { width: 57px; }
.w-l { width: 65px; }

/* Work area */
.work { display: flex; flex: 1; background: #000; }

.column {
  flex: none;
  display: flex;
  flex-direction: column;
  gap: 7px;
  width: 34px;
  padding: 3px 0 0 3px;
  margin-right: 2px;
  background: linear-gradient(90deg, #dedede, #969696);
}
.column.second { width: 33px; padding-left: 2px; margin-right: 1px; }
.column.third { width: 32px; padding-left: 1px; margin: 0 2px; }
.column.fourth { padding-left: 2px; margin: 0; }

.stack { display: flex; flex-direction: column; gap: 2px; }
.stack .grip {
  width: 29px;
  height: 3px;
  background: linear-gradient(#e8e8e8 33%, #a0a0a0 33% 66%, #e8e8e8 66%);
}
.stack .sep { width: 26px; height: 2px; margin: 0 0 -1px 1px; background: #000; }
.dim { fill: #444; }
.black { fill: #000; }

.centre {
  flex: 1;
  display: flex;
  flex-direction: column;
  min-width: 0;
  padding-top: 1px;
}

.ruler { overflow: hidden; background: #ededed; }

.scoreframe {
  flex: 1;
  display: flex;
  min-height: 480px;
  border: 2px solid #00005c;
}
.score { position: relative; flex: 1; min-width: 0; overflow: hidden; background: #cdcdcd; }
.paper { position: absolute; inset: 0; }
.notes { position: relative; }

.vscroll { display: flex; flex-direction: column; width: 16px; padding: 1px 2px; background: #404040; }
.arrow { width: 12px; height: 12px; background: #7c7c7c; fill: #333; }
.arrow svg { width: 12px; height: 12px; }
.vtrack { flex: 1; }
.vthumb { display: block; height: 62%; background: linear-gradient(90deg, #dcdcdc, #989898); }

/* Lower panels */
.tabs { height: 23px; }
.tab {
  display: flex;
  align-items: center;
  gap: 12px;
  width: max-content;
  height: 21px;
  padding: 0 6px 0 5px;
  border-radius: 0 0 4px 4px;
  background: #e8e8e8;
}
.close { width: 14px; height: 14px; border-radius: 3px; background: #c00d12; }

.hscroll { display: flex; align-items: center; height: 16px; padding: 0 2px; background: #404040; }
.htrack { flex: 1; }
.hthumb { display: block; width: 11%; height: 12px; background: linear-gradient(#d8d8d8, #989898); }

.panner { display: flex; height: 80px; }
.wheelbox { display: grid; place-items: center; width: 36px; background: #fee7b3; }
.overview { flex: 1; min-width: 0; margin: 2px 0 2px 2px; overflow: hidden; background: #c0dcf9; }
.wheels { width: 68px; padding-top: 2px; }

.status {
  height: 23px;
  padding: 3px 10px 0;
  border-bottom: 3px solid #c8c8c8;
  background: #000;
  color: #fff;
}

/* Text inside drawings */
.t-serif { font-family: "DejaVu Serif", serif; }
.bold { font-weight: 700; }
.t-sans { font-family: "DejaVu Sans", sans-serif; font-weight: 700; }
.t-ital { font-family: "Liberation Serif", serif; font-style: italic; font-weight: 700; }
.t-octave { font: 15px "DejaVu Serif", serif; }
.t-pedal { font: italic 14px "Liberation Serif", serif; }
.t-num { font-family: "DejaVu Sans", sans-serif; font-size: 13px; }
.t-voice { font-family: "DejaVu Serif", serif; font-size: 24px; }
.t-time { font-family: "Liberation Serif", serif; font-size: 18px; font-weight: 700; text-anchor: middle; }
```
